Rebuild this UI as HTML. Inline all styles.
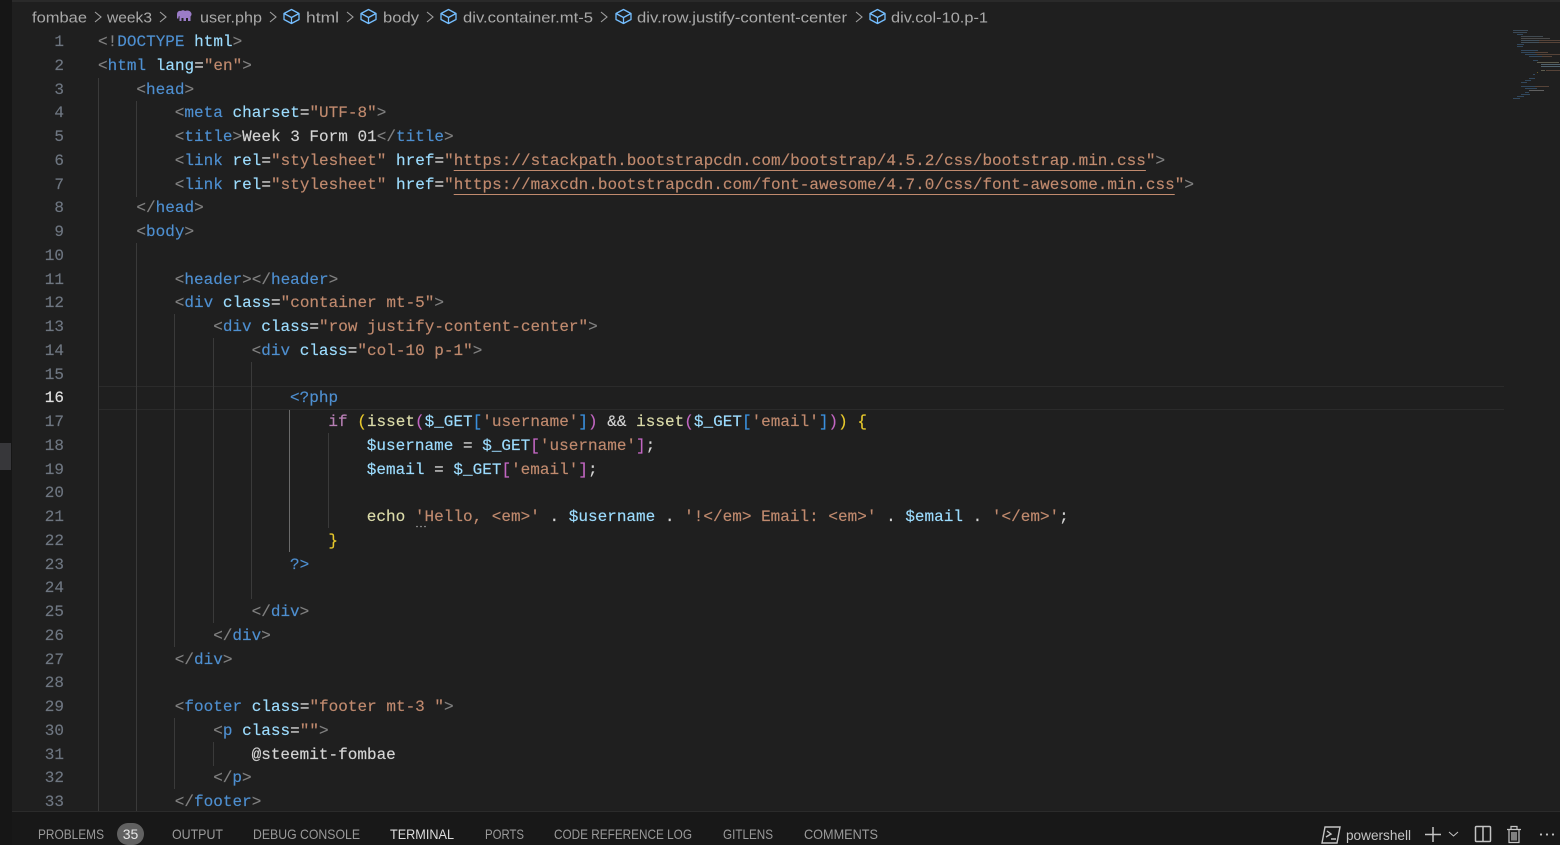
<!DOCTYPE html>
<html lang="en"><head><meta charset="utf-8"><title>user.php</title>
<style>
html,body{margin:0;padding:0;width:1560px;height:845px;overflow:hidden;background:#1f1f1f}
#w{position:relative;width:1560px;height:845px;overflow:hidden;background:#1f1f1f}
#code{position:absolute;left:0;top:3px;width:1560px;height:808px;overflow:hidden}
.l,.n{position:absolute;height:24px;line-height:24px;font-family:"Liberation Mono",monospace;font-size:16px;white-space:pre;color:#d4d4d4;letter-spacing:.012px;-webkit-text-stroke:.15px currentColor}
.n{left:40px;width:24px;text-align:right;color:#6e7681}
.p{color:#808080}.t{color:#4e8fd0}.a{color:#9cdcfe}.s{color:#c08a6e}.w{color:#d4d4d4}
.k{color:#b77fb4}.f{color:#dcdcaa}.y{color:#e8c92c}.m{color:#c266c2}.b{color:#3a8fdc}
.u{text-decoration:underline;text-underline-offset:5px;text-decoration-thickness:1px;text-decoration-color:#c08a6e}
.g{position:absolute;width:1px;background:#3a3a3a}
svg{position:absolute;left:0;top:0}
</style></head><body><div id="w">
<div style="position:absolute;left:0;top:0;width:12px;height:845px;background:#161616"></div>
<div style="position:absolute;left:0;top:443px;width:11px;height:27px;background:#37373a"></div>
<div style="position:absolute;left:12px;top:0;width:1548px;height:2px;background:#2a2a2a"></div>
<div style="position:absolute;left:98px;top:386px;width:1406px;height:22px;border-top:1px solid #2b2b2b;border-bottom:1px solid #2b2b2b"></div>

<div class="g" style="left:98px;top:78px;height:733px"></div>
<div class="g" style="left:136px;top:101px;height:96px"></div>
<div class="g" style="left:136px;top:243px;height:568px"></div>
<div class="g" style="left:174px;top:314px;height:333px"></div>
<div class="g" style="left:174px;top:718px;height:71px"></div>
<div class="g" style="left:213px;top:338px;height:285px"></div>
<div class="g" style="left:213px;top:742px;height:24px"></div>
<div class="g" style="left:251px;top:362px;height:237px"></div>
<div class="g" style="left:289px;top:410px;height:142px;background:#6a6a6a"></div>
<div class="g" style="left:328px;top:433px;height:95px"></div>

<div id="code">
<div class="n" style="top:27px">1</div>
<div class="n" style="top:51px">2</div>
<div class="n" style="top:75px">3</div>
<div class="n" style="top:98px">4</div>
<div class="n" style="top:122px">5</div>
<div class="n" style="top:146px">6</div>
<div class="n" style="top:170px">7</div>
<div class="n" style="top:193px">8</div>
<div class="n" style="top:217px">9</div>
<div class="n" style="top:241px">10</div>
<div class="n" style="top:265px">11</div>
<div class="n" style="top:288px">12</div>
<div class="n" style="top:312px">13</div>
<div class="n" style="top:336px">14</div>
<div class="n" style="top:360px">15</div>
<div class="n" style="top:383px;color:#e0e0e0">16</div>
<div class="n" style="top:407px">17</div>
<div class="n" style="top:431px">18</div>
<div class="n" style="top:455px">19</div>
<div class="n" style="top:478px">20</div>
<div class="n" style="top:502px">21</div>
<div class="n" style="top:526px">22</div>
<div class="n" style="top:550px">23</div>
<div class="n" style="top:573px">24</div>
<div class="n" style="top:597px">25</div>
<div class="n" style="top:621px">26</div>
<div class="n" style="top:645px">27</div>
<div class="n" style="top:668px">28</div>
<div class="n" style="top:692px">29</div>
<div class="n" style="top:716px">30</div>
<div class="n" style="top:740px">31</div>
<div class="n" style="top:763px">32</div>
<div class="n" style="top:787px">33</div>

<div class="l" style="left:98px;top:27px"><span class="p">&lt;!</span><span class="t">DOCTYPE</span> <span class="a">html</span><span class="p">&gt;</span></div>
<div class="l" style="left:98px;top:51px"><span class="p">&lt;</span><span class="t">html</span> <span class="a">lang</span><span class="w">=</span><span class="s">"en"</span><span class="p">&gt;</span></div>
<div class="l" style="left:136.4px;top:75px"><span class="p">&lt;</span><span class="t">head</span><span class="p">&gt;</span></div>
<div class="l" style="left:174.8px;top:98px"><span class="p">&lt;</span><span class="t">meta</span> <span class="a">charset</span><span class="w">=</span><span class="s">"UTF-8"</span><span class="p">&gt;</span></div>
<div class="l" style="left:174.8px;top:122px"><span class="p">&lt;</span><span class="t">title</span><span class="p">&gt;</span><span class="w">Week 3 Form 01</span><span class="p">&lt;/</span><span class="t">title</span><span class="p">&gt;</span></div>
<div class="l" style="left:174.8px;top:146px"><span class="p">&lt;</span><span class="t">link</span> <span class="a">rel</span><span class="w">=</span><span class="s">"stylesheet"</span> <span class="a">href</span><span class="w">=</span><span class="s">"<span class="u">https://stackpath.bootstrapcdn.com/bootstrap/4.5.2/css/bootstrap.min.css</span>"</span><span class="p">&gt;</span></div>
<div class="l" style="left:174.8px;top:170px"><span class="p">&lt;</span><span class="t">link</span> <span class="a">rel</span><span class="w">=</span><span class="s">"stylesheet"</span> <span class="a">href</span><span class="w">=</span><span class="s">"<span class="u">https://maxcdn.bootstrapcdn.com/font-awesome/4.7.0/css/font-awesome.min.css</span>"</span><span class="p">&gt;</span></div>
<div class="l" style="left:136.4px;top:193px"><span class="p">&lt;/</span><span class="t">head</span><span class="p">&gt;</span></div>
<div class="l" style="left:136.4px;top:217px"><span class="p">&lt;</span><span class="t">body</span><span class="p">&gt;</span></div>
<div class="l" style="left:174.8px;top:265px"><span class="p">&lt;</span><span class="t">header</span><span class="p">&gt;&lt;/</span><span class="t">header</span><span class="p">&gt;</span></div>
<div class="l" style="left:174.8px;top:288px"><span class="p">&lt;</span><span class="t">div</span> <span class="a">class</span><span class="w">=</span><span class="s">"container mt-5"</span><span class="p">&gt;</span></div>
<div class="l" style="left:213.2px;top:312px"><span class="p">&lt;</span><span class="t">div</span> <span class="a">class</span><span class="w">=</span><span class="s">"row justify-content-center"</span><span class="p">&gt;</span></div>
<div class="l" style="left:251.6px;top:336px"><span class="p">&lt;</span><span class="t">div</span> <span class="a">class</span><span class="w">=</span><span class="s">"col-10 p-1"</span><span class="p">&gt;</span></div>
<div class="l" style="left:290px;top:383px"><span class="t">&lt;?php</span></div>
<div class="l" style="left:328.4px;top:407px"><span class="k">if</span> <span class="y">(</span><span class="f">isset</span><span class="m">(</span><span class="a">$_GET</span><span class="b">[</span><span class="s">'username'</span><span class="b">]</span><span class="m">)</span> <span class="w">&amp;&amp;</span> <span class="f">isset</span><span class="m">(</span><span class="a">$_GET</span><span class="b">[</span><span class="s">'email'</span><span class="b">]</span><span class="m">)</span><span class="y">)</span> <span class="y">{</span></div>
<div class="l" style="left:366.8px;top:431px"><span class="a">$username</span> <span class="w">=</span> <span class="a">$_GET</span><span class="m">[</span><span class="s">'username'</span><span class="m">]</span><span class="w">;</span></div>
<div class="l" style="left:366.8px;top:455px"><span class="a">$email</span> <span class="w">=</span> <span class="a">$_GET</span><span class="m">[</span><span class="s">'email'</span><span class="m">]</span><span class="w">;</span></div>
<div class="l" style="left:366.8px;top:502px"><span class="f">echo</span> <span class="s">'Hello, &lt;em&gt;'</span> <span class="w">.</span> <span class="a">$username</span> <span class="w">.</span> <span class="s">'!&lt;/em&gt; Email: &lt;em&gt;'</span> <span class="w">.</span> <span class="a">$email</span> <span class="w">.</span> <span class="s">'&lt;/em&gt;'</span><span class="w">;</span></div>
<div class="l" style="left:328.4px;top:526px"><span class="y">}</span></div>
<div class="l" style="left:290px;top:550px"><span class="t">?&gt;</span></div>
<div class="l" style="left:251.6px;top:597px"><span class="p">&lt;/</span><span class="t">div</span><span class="p">&gt;</span></div>
<div class="l" style="left:213.2px;top:621px"><span class="p">&lt;/</span><span class="t">div</span><span class="p">&gt;</span></div>
<div class="l" style="left:174.8px;top:645px"><span class="p">&lt;/</span><span class="t">div</span><span class="p">&gt;</span></div>
<div class="l" style="left:174.8px;top:692px"><span class="p">&lt;</span><span class="t">footer</span> <span class="a">class</span><span class="w">=</span><span class="s">"footer mt-3 "</span><span class="p">&gt;</span></div>
<div class="l" style="left:213.2px;top:716px"><span class="p">&lt;</span><span class="t">p</span> <span class="a">class</span><span class="w">=</span><span class="s">""</span><span class="p">&gt;</span></div>
<div class="l" style="left:251.6px;top:740px"><span class="w">@steemit-fombae</span></div>
<div class="l" style="left:213.2px;top:763px"><span class="p">&lt;/</span><span class="t">p</span><span class="p">&gt;</span></div>
<div class="l" style="left:174.8px;top:787px"><span class="p">&lt;/</span><span class="t">footer</span><span class="p">&gt;</span></div>
</div>

<div style="position:absolute;left:12px;top:811px;width:1548px;height:34px;background:#181818;border-top:1px solid #2b2b2b;box-sizing:border-box"></div>

<svg width="1560" height="845" viewBox="0 0 1560 845" xmlns="http://www.w3.org/2000/svg">
<defs>
<g id="c" fill="none" stroke="#75beff" stroke-width="1.3" stroke-linejoin="round"><path d="M1 5.5 8.5 1.5 16 5.5V11.5L8.5 15.5 1 11.5Z"/><path d="M1 5.5 8.5 9.5 16 5.5M8.5 9.5V15.5"/></g>
<path id="r" d="M0 0 6 5 0 10" fill="none" stroke="#a0a0a0" stroke-width="1.1"/>
</defs>
<g font-family="'Liberation Sans',sans-serif" font-size="15" fill="#a9a9a9">
<text x="32" y="22.5" textLength="55" lengthAdjust="spacingAndGlyphs">fombae</text>
<text x="107" y="22.5" textLength="45" lengthAdjust="spacingAndGlyphs">week3</text>
<text x="200" y="22.5" textLength="62" lengthAdjust="spacingAndGlyphs">user.php</text>
<text x="306" y="22.5" textLength="33" lengthAdjust="spacingAndGlyphs">html</text>
<text x="383" y="22.5" textLength="36" lengthAdjust="spacingAndGlyphs">body</text>
<text x="463" y="22.5" textLength="130" lengthAdjust="spacingAndGlyphs">div.container.mt-5</text>
<text x="637" y="22.5" textLength="210" lengthAdjust="spacingAndGlyphs">div.row.justify-content-center</text>
<text x="891" y="22.5" textLength="97" lengthAdjust="spacingAndGlyphs">div.col-10.p-1</text>
</g>
<use href="#r" x="95" y="12"/><use href="#r" x="160" y="12"/><use href="#r" x="270" y="12"/><use href="#r" x="347" y="12"/><use href="#r" x="427" y="12"/><use href="#r" x="601" y="12"/><use href="#r" x="856" y="12"/>
<use href="#c" x="283" y="8"/><use href="#c" x="360" y="8"/><use href="#c" x="440" y="8"/><use href="#c" x="615" y="8"/><use href="#c" x="869" y="8"/>
<path d="M177 14.5C177 11.5 179 10.5 181 11 182 10 184 10 185 11 187 10 190 10.500 191 12.500 192 14 191.500 15.500 190.500 16.500V21H188V18H186V21H183.500V18H181.500V21H179.500V16C178.500 16 178.500 17.500 178.500 18.500H177Z" fill="#9b7cc8"/>

<g fill="#a9a9a9"><circle cx="417" cy="526.500" r=".8"/><circle cx="421" cy="526.500" r=".8"/><circle cx="425" cy="526.500" r=".8"/></g>

<g font-family="'Liberation Sans',sans-serif" font-size="14" fill="#9a9a9a">
<text x="38" y="839" textLength="66" lengthAdjust="spacingAndGlyphs">PROBLEMS</text>
<text x="172" y="839" textLength="51" lengthAdjust="spacingAndGlyphs">OUTPUT</text>
<text x="253" y="839" textLength="107" lengthAdjust="spacingAndGlyphs">DEBUG CONSOLE</text>
<text x="390" y="839" textLength="64" lengthAdjust="spacingAndGlyphs" fill="#dcdcdc">TERMINAL</text>
<text x="485" y="839" textLength="39" lengthAdjust="spacingAndGlyphs">PORTS</text>
<text x="554" y="839" textLength="138" lengthAdjust="spacingAndGlyphs">CODE REFERENCE LOG</text>
<text x="723" y="839" textLength="50" lengthAdjust="spacingAndGlyphs">GITLENS</text>
<text x="804" y="839" textLength="74" lengthAdjust="spacingAndGlyphs">COMMENTS</text>
<text x="1346" y="840" textLength="65" lengthAdjust="spacingAndGlyphs" fill="#c4c4c4">powershell</text>
</g>
<rect x="117" y="823" width="27" height="22" rx="11" fill="#616161"/>
<text x="130.500" y="839" text-anchor="middle" font-family="'Liberation Sans',sans-serif" font-size="14" fill="#e8e8e8">35</text>

<g fill="none" stroke="#c4c4c4" stroke-width="1.4">
<path d="M1325 827H1340L1337 843H1322Z"/><path d="M1327 831 1331 834 1326 837M1331 839H1336"/>
<path d="M1433 827V842M1425 834.500H1441" stroke-width="1.5"/>
<path d="M1449 832 1453.500 836 1458 832" stroke-width="1"/>
<rect x="1475.500" y="826.500" width="15" height="15" rx="1" stroke-width="1.5"/><path d="M1483 827V841" stroke-width="1.5"/>
<path d="M1507 829.500H1521M1511 829V826.500H1517V829M1509 830V842.500H1519V830M1512 832V840.500M1514 832V840.500M1516 832V840.500" stroke-width="1.2"/>
</g>
<g fill="#c4c4c4"><circle cx="1541" cy="834.500" r="1.100"/><circle cx="1547" cy="834.500" r="1.100"/><circle cx="1553" cy="834.500" r="1.100"/></g>

<g opacity=".45" shape-rendering="crispEdges">
<rect x="1513" y="30" width="15" height="1" fill="#5b7c9c"/>
<rect x="1513" y="32" width="14" height="1" fill="#5b7c9c"/>
<rect x="1517" y="34" width="6" height="1" fill="#4a7aa8"/>
<rect x="1521" y="36" width="22" height="1" fill="#6b7f8e"/>
<rect x="1521" y="38" width="29" height="1" fill="#7f7f7f"/>
<rect x="1521" y="40" width="18" height="1" fill="#6b8ca5"/><rect x="1539" y="40" width="21" height="1" fill="#9a6f58"/>
<rect x="1521" y="42" width="18" height="1" fill="#6b8ca5"/><rect x="1539" y="42" width="21" height="1" fill="#9a6f58"/>
<rect x="1517" y="44" width="7" height="1" fill="#4a7aa8"/>
<rect x="1517" y="46" width="6" height="1" fill="#4a7aa8"/>
<rect x="1521" y="50" width="17" height="1" fill="#4a7aa8"/>
<rect x="1521" y="52" width="14" height="1" fill="#4a7aa8"/><rect x="1535" y="52" width="13" height="1" fill="#9a6f58"/>
<rect x="1525" y="54" width="12" height="1" fill="#4a7aa8"/><rect x="1537" y="54" width="23" height="1" fill="#9a6f58"/>
<rect x="1529" y="56" width="13" height="1" fill="#4a7aa8"/><rect x="1542" y="56" width="10" height="1" fill="#9a6f58"/>
<rect x="1533" y="60" width="5" height="1" fill="#4a7aa8"/>
<rect x="1537" y="62" width="22" height="1" fill="#a8a88a"/>
<rect x="1541" y="64" width="19" height="1" fill="#8cb4cc"/>
<rect x="1541" y="66" width="19" height="1" fill="#8cb4cc"/>
<rect x="1541" y="70" width="4" height="1" fill="#a8a88a"/><rect x="1546" y="70" width="14" height="1" fill="#9a6f58"/>
<rect x="1537" y="72" width="1" height="1" fill="#c9ad2c"/>
<rect x="1533" y="74" width="2" height="1" fill="#4a7aa8"/>
<rect x="1529" y="78" width="6" height="1" fill="#4a7aa8"/>
<rect x="1525" y="80" width="6" height="1" fill="#4a7aa8"/>
<rect x="1521" y="82" width="6" height="1" fill="#4a7aa8"/>
<rect x="1521" y="86" width="14" height="1" fill="#4a7aa8"/><rect x="1535" y="86" width="14" height="1" fill="#9a6f58"/>
<rect x="1525" y="88" width="12" height="1" fill="#4a7aa8"/>
<rect x="1529" y="90" width="15" height="1" fill="#b0b0b0"/>
<rect x="1525" y="92" width="4" height="1" fill="#4a7aa8"/>
<rect x="1521" y="94" width="9" height="1" fill="#4a7aa8"/>
<rect x="1517" y="96" width="7" height="1" fill="#4a7aa8"/>
<rect x="1513" y="98" width="7" height="1" fill="#4a7aa8"/>
</g>
</svg>
</div></body></html>
